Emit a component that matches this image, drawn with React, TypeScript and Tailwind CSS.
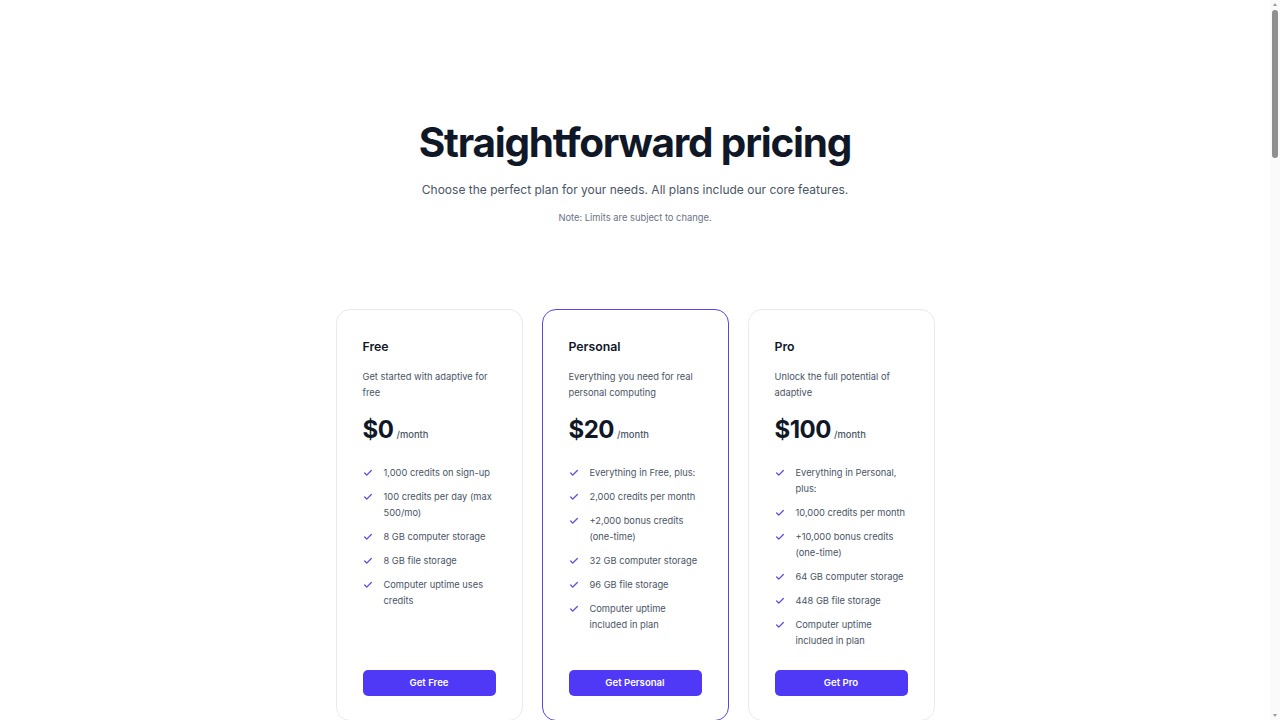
import { Check } from "lucide-react";

const plans = [
  {
    name: "Free",
    description: "Get started with adaptive for free",
    price: "$0",
    cta: "Get Free",
    featured: false,
    features: [
      "1,000 credits on sign-up",
      "100 credits per day (max 500/mo)",
      "8 GB computer storage",
      "8 GB file storage",
      "Computer uptime uses credits",
    ],
  },
  {
    name: "Personal",
    description: "Everything you need for real personal computing",
    price: "$20",
    cta: "Get Personal",
    featured: true,
    features: [
      "Everything in Free, plus:",
      "2,000 credits per month",
      "+2,000 bonus credits (one-time)",
      "32 GB computer storage",
      "96 GB file storage",
      "Computer uptime included in plan",
    ],
  },
  {
    name: "Pro",
    description: "Unlock the full potential of adaptive",
    price: "$100",
    cta: "Get Pro",
    featured: false,
    features: [
      "Everything in Personal, plus:",
      "10,000 credits per month",
      "+10,000 bonus credits (one-time)",
      "64 GB computer storage",
      "448 GB file storage",
      "Computer uptime included in plan",
    ],
  },
];

function Scrollbar() {
  return (
    <aside className="flex h-screen w-[10px] shrink-0 flex-col items-center bg-[#fafafa]">
      <svg viewBox="0 0 6 4" className="mt-[3px] h-[3px] w-[6px] text-[#a3a3a3]">
        <path d="M3 0 6 4H0z" fill="currentColor" />
      </svg>
      <div className="mt-[4px] h-[148px] w-[6px] rounded-full bg-[#8f8f8f]" />
      <div className="flex-1" />
      <svg viewBox="0 0 6 4" className="mb-[3px] h-[3px] w-[6px] text-[#a3a3a3]">
        <path d="M0 0h6L3 4z" fill="currentColor" />
      </svg>
    </aside>
  );
}

export default function App() {
  return (
    <div className="flex h-screen overflow-hidden bg-white font-['Inter',sans-serif] text-[#101828]">
      <main className="min-w-0 flex-1">
        {/* Header */}
        <section className="flex flex-col items-center pt-[123px] text-center">
          <h1 className="text-[40.5px] leading-[40px] font-bold tracking-[-0.03em] text-[#101828]">
            Straightforward pricing
          </h1>
          <p className="mt-[17px] text-[12px] leading-5 text-[#4a5565]">
            Choose the perfect plan for your needs. All plans include our core features.
          </p>
          <p className="mt-[10px] text-[9.35px] leading-4 text-[#6a7282]">
            Note: Limits are subject to change.
          </p>
        </section>

        {/* Plans */}
        <section className="mx-auto mt-[83px] grid w-[599px] grid-cols-3 gap-[19px]">
          {plans.map((plan) => (
            <div
              key={plan.name}
              className={`flex flex-col rounded-[14px] bg-white px-[26px] pt-[27px] pb-6 ${
                plan.featured
                  ? "border-[1.5px] border-[#5a45e0]"
                  : "border border-[#e9eaee]"
              }`}
            >
              <h3 className="text-[12.3px] leading-5 font-semibold text-[#101828]">
                {plan.name}
              </h3>
              <p className="mt-3 text-[9.3px] leading-4 text-[#4a5565]">
                {plan.description}
              </p>
              <div className="mt-[13px] flex items-baseline gap-[3px]">
                <span className="text-[24px] leading-8 font-bold tracking-[-0.02em] text-[#101828]">
                  {plan.price}
                </span>
                <span className="text-[9.4px] font-medium text-[#4a5565]">/month</span>
              </div>
              <ul className="mt-[19px] mb-[21px] flex flex-col gap-2">
                {plan.features.map((feature) => (
                  <li key={feature} className="flex items-start gap-[11px]">
                    <Check
                      className="mt-[3px] h-[10px] w-[10px] shrink-0 text-[#5b47dc]"
                      strokeWidth={3}
                    />
                    <span className="text-[9.3px] leading-4 text-[#4a5565]">{feature}</span>
                  </li>
                ))}
              </ul>
              <button
                type="button"
                className="mt-auto h-[26px] w-full rounded-[5px] bg-[#4f39f6] text-[9.6px] font-semibold text-white"
              >
                {plan.cta}
              </button>
            </div>
          ))}
        </section>
      </main>
      <Scrollbar />
    </div>
  );
}
